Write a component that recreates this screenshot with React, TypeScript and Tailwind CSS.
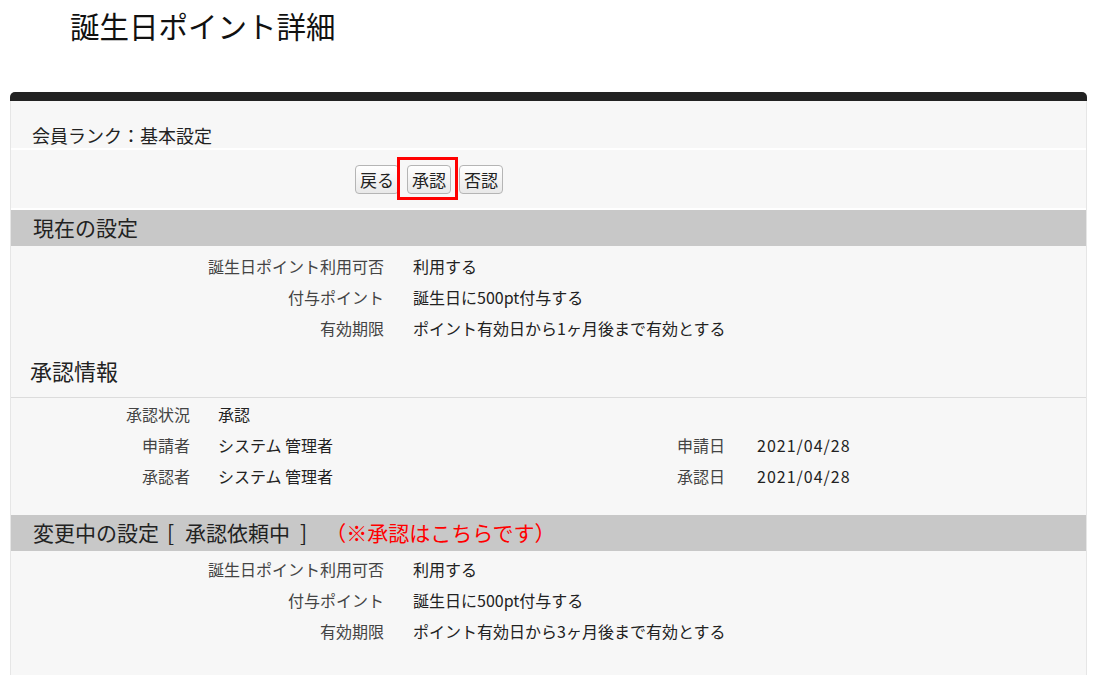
import React from 'react';

const CURRENT = [
  { label: '誕生日ポイント利用可否', value: '利用する' },
  { label: '付与ポイント', value: '誕生日に500pt付与する' },
  { label: '有効期限', value: 'ポイント有効日から1ヶ月後まで有効とする' },
];

const PENDING = [
  { label: '誕生日ポイント利用可否', value: '利用する' },
  { label: '付与ポイント', value: '誕生日に500pt付与する' },
  { label: '有効期限', value: 'ポイント有効日から3ヶ月後まで有効とする' },
];

const APPROVAL = [
  { label: '承認状況', value: '承認' },
  { label: '申請者', value: 'システム 管理者', label2: '申請日', value2: '2021/04/28' },
  { label: '承認者', value: 'システム 管理者', label2: '承認日', value2: '2021/04/28' },
];

const SettingRows: React.FC<{ rows: { label: string; value: string }[] }> = ({ rows }) => (
  <div>
    {rows.map((row) => (
      <div key={row.label} className="h-[31px] flex items-center">
        <div className="w-[373px] text-right text-[#444]">{row.label}</div>
        <div className="ml-[29px] text-[#222]">{row.value}</div>
      </div>
    ))}
  </div>
);

const Button: React.FC<{ children: React.ReactNode }> = ({ children }) => (
  <button className="h-[29px] px-[4px] text-[17px] leading-none text-[#222] rounded-[4px] border border-[#b5b5b5] bg-gradient-to-b from-white to-[#e9e9e9]">
    {children}
  </button>
);

export default function App() {
  return (
    <div className="min-h-[675px] bg-white font-['Noto_Sans_CJK_JP',sans-serif] text-[16px]">
      {/* Title */}
      <div className="h-[92px] pl-[70px] pt-[6px]">
        <h1 className="text-[29.5px] leading-[38px] text-[#111]">誕生日ポイント詳細</h1>
      </div>

      {/* Panel */}
      <div className="mx-[10px] w-[1077px]">
        <div className="h-[9px] rounded-t-[5px] bg-[#222]" />
        <div className="bg-[#f7f7f7] border-x border-[#e6e6e6] pb-[40px]">
          <div className="h-[47px] pl-[21px] pt-[21px] text-[18px] leading-[26px] text-[#222]">
            会員ランク：基本設定
          </div>

          {/* Buttons */}
          <div className="h-[62px] border-y-2 border-white flex items-center pl-[344px] gap-[8px]">
            <Button>戻る</Button>
            <span className="relative">
              <Button>承認</Button>
              <span className="absolute left-[-10px] right-[-7px] top-[-8px] bottom-[-6px] border-[3px] border-[#ff0000]" />
            </span>
            <Button>否認</Button>
          </div>

          {/* Current settings */}
          <div className="h-[36px] bg-[#c8c8c8] pl-[22px] flex items-center text-[21px] text-[#222]">
            現在の設定
          </div>
          <div className="pt-[4px]">
            <SettingRows rows={CURRENT} />
          </div>

          {/* Approval info */}
          <div className="h-[54px] pl-[19px] flex items-center text-[22px] text-[#222]">承認情報</div>
          <div className="border-t border-[#dcdcdc] pb-[24px]">
            {APPROVAL.map((row) => (
              <div key={row.label} className="h-[31px] flex items-center">
                <div className="w-[179px] text-right text-[#444]">{row.label}</div>
                <div className="ml-[28px] w-[400px] text-[#222]">{row.value}</div>
                {row.label2 && (
                  <>
                    <div className="w-[107px] text-right text-[#444]">{row.label2}</div>
                    <div className="ml-[32px] text-[#222] tracking-[1px]">{row.value2}</div>
                  </>
                )}
              </div>
            ))}
          </div>

          {/* Pending settings */}
          <div className="h-[36px] bg-[#c8c8c8] pl-[22px] flex items-center text-[21px] text-[#222]">
            <span>変更中の設定</span>
            <span className="ml-[8px]">[</span>
            <span className="ml-[11px]">承認依頼中</span>
            <span className="ml-[10px]">]</span>
            <span className="ml-[18px] text-[#ff0000]">（※承認はこちらです）</span>
          </div>
          <div className="pt-[2px]">
            <SettingRows rows={PENDING} />
          </div>
        </div>
      </div>
    </div>
  );
}
